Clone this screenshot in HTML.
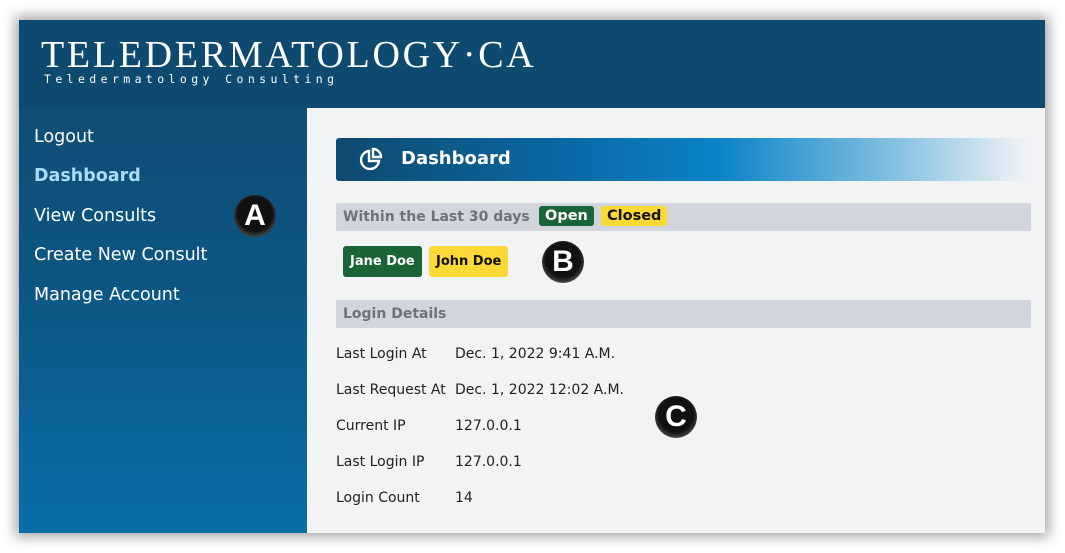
<!DOCTYPE html>
<html><head><style>
body{margin:0;width:1065px;height:553px;background:#fff;position:relative;overflow:hidden;font-family:"DejaVu Sans","Liberation Sans",sans-serif}
#frame{position:absolute;left:19px;top:20px;width:1026px;height:513px;box-shadow:0 0 12px 4px rgba(0,0,0,.35);background:linear-gradient(180deg,#0e4a6f 0%,#0d5582 50%,#0a6ea8 100%);overflow:hidden}
#hdr{position:absolute;left:0;top:0;width:1026px;height:88px;background:#0e4a6f}
.logo{position:absolute;left:22px;top:16px;color:#fff;font-family:"Liberation Serif",serif;font-size:38px;letter-spacing:2.7px;line-height:1}
.sub{position:absolute;left:25px;top:52px;color:#fff;font-family:"DejaVu Sans Mono",monospace;font-size:11.5px;letter-spacing:4.4px}
.nav{position:absolute;left:15px;color:#fff;font-size:17.5px}
#main{position:absolute;left:288px;top:88px;width:738px;height:425px;background:#f2f3f5}
.bar{position:absolute;left:29px;top:30px;width:692px;height:43px;border-radius:3px;background:linear-gradient(90deg,#0e4a6f 0%,#0a6aa8 35%,#0a83c6 55%,#7fbfe0 80%,#f2f3f5 100%)}
.bar span{position:absolute;left:65px;top:10px;color:#fff;font-weight:bold;font-size:18px}
.gbar{position:absolute;left:29px;width:695px;height:28px;background:#d2d5dc;border-radius:2px}
.gbar b{position:absolute;left:7px;top:6px;color:#6b7280;font-size:14px}
.tag{position:absolute;font-weight:bold;font-size:14.5px;border-radius:3px;padding:2px 6px}
.row{position:absolute;left:29px;font-size:14px;color:#222}
.row i{font-style:normal;position:absolute;left:119px;white-space:nowrap}
.circ{position:absolute;width:42px;height:42px;border-radius:50%;background:radial-gradient(circle at 50% 45%,#111 55%,#666 85%,#bbb 100%);color:#fff;font:bold 30px "Liberation Sans",sans-serif;text-align:center;line-height:42px}
</style></head><body>
<div id="frame">
<div id="hdr"><div class="logo">TELEDERMATOLOGY·CA</div><div class="sub">Teledermatology Consulting</div></div>
<div class="nav" style="top:107px">Logout</div>
<div class="nav" style="top:146px;color:#a9dcf5;font-weight:bold">Dashboard</div>
<div class="nav" style="top:186px">View Consults</div>
<div class="nav" style="top:225px">Create New Consult</div>
<div class="nav" style="top:265px">Manage Account</div>
<div class="circ" style="left:215px;top:175px">A</div>
<div id="main">
<div class="bar"><svg style="position:absolute;left:22px;top:9px" width="26" height="26" viewBox="0 0 26 26" fill="none" stroke="#fff" stroke-width="2.4"><path d="M11 4a9 9 0 1 0 10 10H11z"/><path d="M15 2v8h8a8 8 0 0 0-8-8z"/></svg><span>Dashboard</span></div>
<div class="gbar" style="top:95px"><b>Within the Last 30 days</b></div>
<div class="tag" style="left:232px;top:98px;background:#1a6437;color:#fff">Open</div>
<div class="tag" style="left:294px;top:98px;background:#fcd934;color:#111">Closed</div>
<div class="tag" style="left:36px;top:138px;background:#1a6437;color:#fff;font-size:13px;padding:8px 7px">Jane Doe</div>
<div class="tag" style="left:122px;top:138px;background:#fcd934;color:#111;font-size:13px;padding:8px 7px">John Doe</div>
<div class="circ" style="left:235px;top:133px">B</div>
<div class="gbar" style="top:192px"><b>Login Details</b></div>
<div class="row" style="top:238px">Last Login At<i>Dec. 1, 2022 9:41 A.M.</i></div>
<div class="row" style="top:274px">Last Request At<i>Dec. 1, 2022 12:02 A.M.</i></div>
<div class="row" style="top:310px">Current IP<i>127.0.0.1</i></div>
<div class="row" style="top:346px">Last Login IP<i>127.0.0.1</i></div>
<div class="row" style="top:382px">Login Count<i>14</i></div>
<div class="circ" style="left:348px;top:288px">C</div>
</div>
</div>
</body></html>
